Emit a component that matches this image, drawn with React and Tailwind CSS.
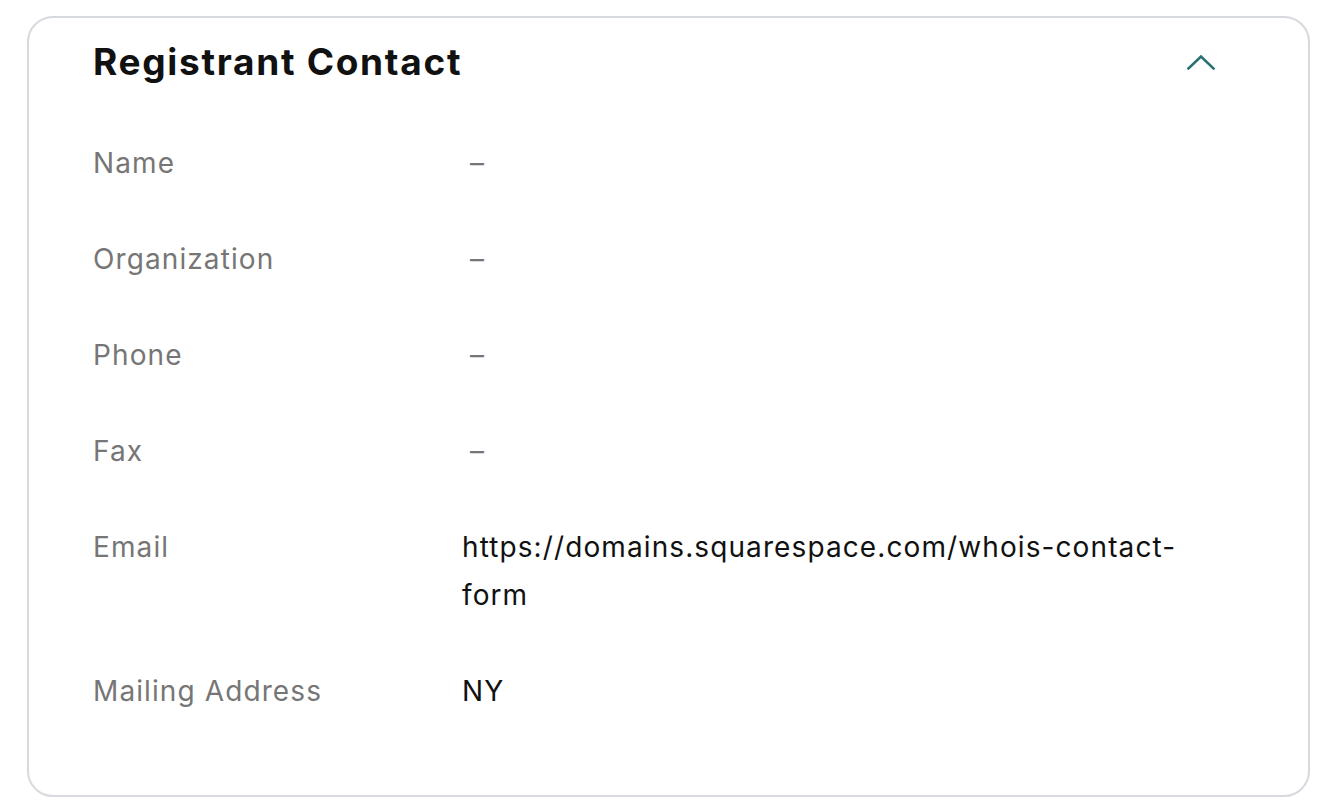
import React from 'react'

const rows = [
  { label: 'Name', value: '–', muted: true },
  { label: 'Organization', value: '–', muted: true },
  { label: 'Phone', value: '–', muted: true },
  { label: 'Fax', value: '–', muted: true },
  { label: 'Email', value: 'https://domains.squarespace.com/whois-contact-form' },
  { label: 'Mailing Address', value: 'NY' },
]

export default function App() {
  return (
    <div className="min-h-screen bg-white pt-[16px] pl-[27px]" style={{ fontFamily: 'Inter, "Noto Sans", sans-serif' }}>
      <div className="w-[1283px] rounded-[26px] border-2 border-[#d6d9de] pl-[64px] pr-[94px] pt-[20px] pb-[80px]">
        <div className="flex h-[48px] items-center justify-between">
          <h2 className="text-[37px] font-bold leading-[48px] tracking-[1.7px] text-[#111111]">Registrant Contact</h2>
          <svg width="30" height="18" viewBox="0 0 30 18" fill="none" className="mr-[-2px]">
            <path d="M2.5 15.5 L15 3.5 L27.5 15.5" stroke="#2b7173" strokeWidth="2.6" strokeLinecap="square" />
          </svg>
        </div>
        <div className="mt-[53px] flex flex-col gap-[48px]">
          {rows.map(r => (
            <div key={r.label} className="flex text-[28px] leading-[48px] tracking-[1.1px]">
              <div className="w-[369px] shrink-0 text-[#767676]">{r.label}</div>
              <div className={'flex-1 break-words ' + (r.muted ? 'pl-[8px] text-[#767676]' : 'text-[#111111]')}>{r.value}</div>
            </div>
          ))}
        </div>
      </div>
    </div>
  )
}
